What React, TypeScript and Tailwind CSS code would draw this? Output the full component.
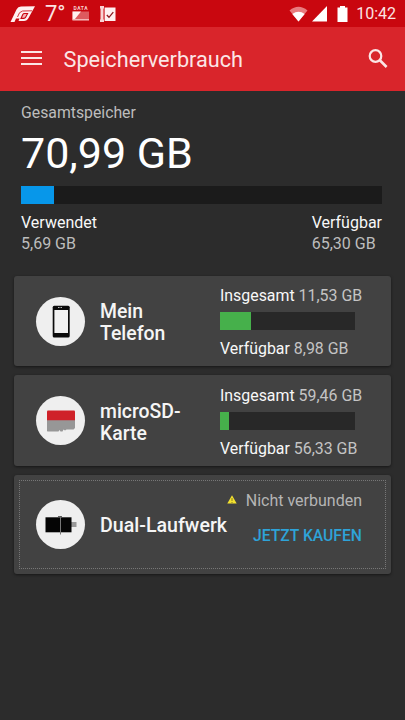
import type { ReactNode } from 'react'

function StatusBar() {
    return (
        <div className="flex h-[27px] shrink-0 items-center bg-[#c9070f] text-[#fbe3e3]">
            {/* notifications */}
            <svg className="ml-[10px] h-[18px] w-[26px]" viewBox="0 0 26 18">
                <path d="M0.5 17 L6.5 4.5 Q8 1.6 11 1.5 L25 1.2 L18.5 13 Q17 16 14 16 L8.5 16 L9.5 13.5 L6 13.5 L4.5 17 Z" fill="#fff0f0" />
                <path d="M7.5 12 Q9 6.5 12.5 6 L22 5.8" fill="none" stroke="#d4363c" strokeWidth="1" />
                <path d="M11 13.4 L12.8 9.6 Q13.3 8.5 14.6 8.5 L17.6 8.5 L15.6 12.3 Q15 13.4 13.8 13.4 Z" fill="#f3b3b5" stroke="#c9070f" strokeWidth="1.1" />
            </svg>
            <span className="ml-[9px] w-[20px] text-[22px] leading-[27px]">7°</span>
            <svg className="ml-[7px] h-[18px] w-[18px]" viewBox="0 0 18 18">
                <text x="1.5" y="4.8" fontSize="5" fontWeight="700" textLength="14" fill="#f8cfcf">DATA</text>
                <rect x="0.5" y="6.5" width="16.5" height="9" fill="#dd5a5e" />
                <path d="M0.5 6.5 H9 L2.5 14.5 H0.5 Z" fill="#fff0f0" />
                <rect x="0.5" y="14" width="16.5" height="1.4" fill="#f3b5b5" />
            </svg>
            <svg className="ml-[9px] h-[18px] w-[18px]" viewBox="0 0 18 18">
                <path d="M1 1 H5 V3 L4.5 4 V14 L5 15 V17 H1 V15 L1.5 14 V4 L1 3 Z" fill="#f9d3d3" />
                <path d="M5.6 2.5 H16.5 V16 H5.6 Z" fill="#fff0f0" />
                <path d="M7.8 10 L10 12.3 L14.3 7.2" fill="none" stroke="#8d1a20" strokeWidth="1.3" />
            </svg>

            {/* wifi, signal, battery */}
            <svg className="ml-auto h-[16px] w-[20px]" viewBox="0 0 20 16">
                <path d="M0.5 4.5 Q9.5 -3 18.5 4.5 L9.5 15.5 Z" fill="#e87c7f" />
                <path d="M3.3 8 Q9.5 3.5 15.7 8 L9.5 15.5 Z" fill="#fff" />
            </svg>
            <svg className="ml-[3px] h-[16px] w-[16px]" viewBox="0 0 16 16">
                <path d="M15 0 V15.5 H0 Z" fill="#fff" />
            </svg>
            <svg className="ml-[9px] h-[16px] w-[11px]" viewBox="0 0 11 16">
                <path d="M3 0 H8 V1.5 H10.5 V16 H0.5 V1.5 H3 Z" fill="#fff" />
            </svg>
            <span className="mr-[9px] ml-[8px] pt-[1px] text-[16px] leading-[26px]">10:42</span>
        </div>
    )
}

function Header() {
    return (
        <div className="flex h-[64px] shrink-0 items-center bg-[#d9252b] pr-[17px] pl-[21px] text-[#fbe6e6]">
            <svg className="h-[16px] w-[21px]" viewBox="0 0 21 16">
                <path d="M0 1 H21 M0 7 H21 M0 13 H21" stroke="currentColor" strokeWidth="2" />
            </svg>
            <h1 className="ml-[21px] pt-[1px] pl-[0.5px] text-[21.7px] leading-[28px]">Speicherverbrauch</h1>
            <svg className="mt-[-2px] ml-auto h-[19px] w-[20px]" viewBox="0 0 20 19">
                <circle cx="7.5" cy="7" r="5.8" fill="none" stroke="currentColor" strokeWidth="2.2" />
                <path d="M11.6 11 L18.6 18" stroke="currentColor" strokeWidth="2.6" />
            </svg>
        </div>
    )
}

function Circle({ children }: { children: ReactNode }) {
    return (
        <div className="ml-[22px] flex size-[49px] shrink-0 items-center justify-center rounded-full bg-[#efefef]">
            {children}
        </div>
    )
}

function Card({
    icon,
    title,
    total,
    free,
    percent,
    className
}: {
    icon: ReactNode,
    title: string,
    total: string,
    free: string,
    percent: number,
    className: string
}) {
    return (
        <div className={`flex items-center rounded-[3px] bg-[#424242] shadow-[0_1px_3px_rgba(0,0,0,0.5)] ${className}`}>
            <Circle>{icon}</Circle>
            <h2 className="ml-[15px] w-[90px] pt-[4px] text-[19.4px] leading-[22px] font-medium text-[#f5f5f5]">{title}</h2>
            <div className="ml-auto w-[171px] pt-[3px] text-[15.9px] leading-[20px] text-[#c4c4c4]">
                <p className="whitespace-nowrap"><span className="text-[#f8f8f8]">Insgesamt</span> {total}</p>
                <div className="mt-[6px] mb-[9px] h-[18px] w-[135px] bg-[#282828]">
                    <div className="h-full bg-[#46b04b]" style={{ width: `${percent}%` }} />
                </div>
                <p className="whitespace-nowrap"><span className="text-[#f8f8f8]">Verfügbar</span> {free}</p>
            </div>
        </div>
    )
}

function PhoneIcon() {
    return (
        <svg className="h-[33px] w-[18px]" viewBox="0 0 18 33">
            <rect x="0.7" y="0.8" width="17" height="31.6" rx="1.5" fill="#0b0b0b" />
            <rect x="2.4" y="5" width="13.6" height="23" fill="#f1f1f1" />
            <path d="M6 2.5 H7.5 M8.5 2.5 H10" stroke="#bbb" strokeWidth="1" />
        </svg>
    )
}

function SdIcon() {
    return (
        <svg className="h-[22px] w-[28px]" viewBox="0 0 28 22">
            <path d="M0 10 H28 V18 L26.5 19.5 H19.5 L18 20.5 L16.5 19.5 L15.5 21.5 H13.5 L12.5 20 L11.5 21.5 H0.5 L0 21 Z" fill="#979797" />
            <path d="M1 0.5 H27 Q28 0.5 28 1.5 V10.3 H0 V1.5 Q0 0.5 1 0.5 Z" fill="#cf2229" />
        </svg>
    )
}

function DriveIcon() {
    return (
        <svg className="ml-[1px] h-[20px] w-[32px]" viewBox="0 0 32 20">
            <rect x="26" y="7" width="5.5" height="5" fill="#999" />
            <rect x="0.5" y="2.3" width="26" height="15" fill="#050505" />
            <path d="M15.5 1 V19.5" stroke="#777" strokeWidth="1" />
            <path d="M13 1.6 H17" stroke="#555" strokeWidth="1" />
        </svg>
    )
}

function App() {
    return (
        <div className="flex h-[720px] w-[405px] flex-col overflow-hidden bg-[#2c2c2c] font-[Roboto,sans-serif]">
            <StatusBar />
            <Header />

            {/* total storage */}
            <div className="flex flex-col px-[21px] pt-[11px] text-[16px] leading-[21px] text-[#bdbdbd]">
                <span className="text-[15.8px]">Gesamtspeicher</span>
                <span className="mt-[5px] text-[43px] leading-[50px] text-white">70,99 GB</span>
                <div className="mt-[8px] mr-[2px] h-[18px] bg-[#1b1b1b]">
                    <div className="h-full w-[33px] bg-[#0797ea]" />
                </div>
                <div className="mt-[8px] mr-[2px] flex justify-between">
                    <div>
                        <p className="text-[#f8f8f8]">Verwendet</p>
                        <p>5,69 GB</p>
                    </div>
                    <div>
                        <p className="text-[#f8f8f8]">Verfügbar</p>
                        <p>65,30 GB</p>
                    </div>
                </div>
            </div>

            {/* devices */}
            <div className="mt-[22px] flex flex-col gap-[9px] px-[14px]">
                <Card className="h-[90px]" icon={<PhoneIcon />} title="Mein Telefon" total="11,53 GB" free="8,98 GB" percent={23} />
                <Card className="h-[91px]" icon={<SdIcon />} title="microSD-Karte" total="59,46 GB" free="56,33 GB" percent={6.3} />
                <div className="h-[99px] rounded-[3px] bg-[#424242] p-[5px] shadow-[0_1px_3px_rgba(0,0,0,0.5)]">
                    <div className="flex h-[89px] items-center border border-dotted border-[#777]">
                        <div className="-ml-[6px]">
                            <Circle><DriveIcon /></Circle>
                        </div>
                        <h2 className="ml-[15px] pt-[2px] text-[19.6px] leading-[22px] font-medium whitespace-nowrap text-[#f5f5f5]">Dual-Laufwerk</h2>
                        <div className="mr-[23px] ml-auto flex flex-col items-end self-start pt-[9px] text-[16px] leading-[22px] whitespace-nowrap">
                            <p className="-ml-[20px] flex items-center text-[#b5b5b5]">
                                <svg className="mt-[-3px] mr-[9px] h-[9px] w-[10px]" viewBox="0 0 10 9">
                                    <path d="M5 0.3 L9.7 8.6 H0.3 Z" fill="#f3e12f" />
                                    <path d="M5 3 V6 M5 7 V8" stroke="#8a7d20" strokeWidth="1" />
                                </svg>
                                Nicht verbunden
                            </p>
                            <a className="mt-[13px] text-[15.7px] font-medium text-[#2ea3d8]">JETZT KAUFEN</a>
                        </div>
                    </div>
                </div>
            </div>
        </div>
    )
}

export default App
